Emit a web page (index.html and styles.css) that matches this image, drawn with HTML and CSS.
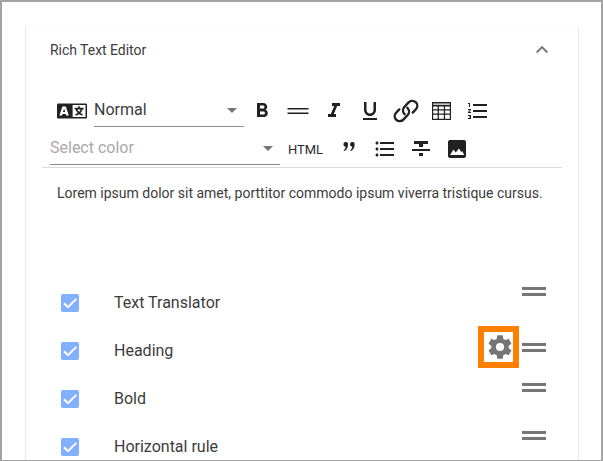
FILE: index.html
```html
<!DOCTYPE html>
<html lang="en">
<head>
<meta charset="utf-8">
<title>Rich Text Editor</title>
<link rel="stylesheet" href="styles.css">
</head>
<body>
<main class="frame">
  <section class="card">
    <header class="card-header">
      <h1 class="title">Rich Text Editor</h1>
      <svg class="chevron" viewBox="0 0 16 12"><path d="M2.7 8.5 8 3.2l5.3 5.3"/></svg>
    </header>
    <div class="toolbar">
      <div class="tool-row first">
        <svg class="tool translate" viewBox="0 0 36 36">
          <rect x="3" y="10.5" width="30" height="15" rx="1.2"/>
          <rect class="paper" x="18.6" y="12" width="12.9" height="12"/>
          <path class="paper" fill-rule="evenodd" d="M8.400 13.500h3.400l3 9h-2.600l-.5-1.600H8.500l-.5 1.600H5.400zM9 19h2.200l-1.100-3.600z"/>
          <path class="stroke" stroke-width="1.7" d="M20.600 15.700h9M25 13.200v2.500M22.300 16c.8 2.800 3 5 6.200 6M27.800 16c-.8 2.800-3 5-6.300 6"/>
        </svg>
        <div class="select heading-select"><span>Normal</span><i class="caret"></i></div>
        <svg class="tool" viewBox="-6 -6 36 36"><path d="M15.6 10.79c.97-.67 1.65-1.77 1.65-2.79 0-2.26-1.75-4-4-4H7v14h7.04c2.09 0 3.71-1.7 3.71-3.79 0-1.52-.86-2.82-2.15-3.42zM10 6.5h3c.83 0 1.5.67 1.5 1.5s-.67 1.5-1.5 1.5h-3v-3zm3.5 9H10v-3h3.5c.83 0 1.5.67 1.5 1.5s-.67 1.5-1.5 1.5z"/></svg>
        <svg class="tool" viewBox="0 0 36 36"><path d="M7.5 15h21v1.5h-21zM7.5 19.4h21v1.5h-21z"/></svg>
        <svg class="tool" viewBox="-6 -6 36 36"><path d="M10 4v3h2.21l-3.42 8H6v3h8v-3h-2.21l3.42-8H18V4z"/></svg>
        <svg class="tool" viewBox="-6 -6 36 36"><path d="M12 17c3.31 0 6-2.69 6-6V3h-2.5v8c0 1.93-1.57 3.5-3.5 3.5S8.5 12.93 8.5 11V3H6v8c0 3.31 2.69 6 6 6zm-7 2v2h14v-2H5z"/></svg>
        <svg class="tool" viewBox="0 0 36 36"><path class="stroke" stroke-width="2.4" stroke-linecap="round" d="M16.600 21.200a5.200 5.200 0 0 1-.3-7.200l4.300-4.600a5 5 0 0 1 7.300 6.900l-3.200 3.300M19.400 14.800a5.200 5.200 0 0 1 .3 7.200l-4.300 4.600a5 5 0 0 1-7.300-6.900l3.200-3.300"/></svg>
        <svg class="tool" viewBox="0 0 36 36"><path fill-rule="evenodd" d="M8 9h19v18H8zm1.200 1.400v1.300h16.600v-1.300zm0 3.100v2.700h4.400v-2.700zm5.700 0v2.700h4.900v-2.700zm6.200 0v2.700h4.700v-2.700zm-11.900 4.100v2.800h4.400v-2.800zm5.700 0v2.800h4.900v-2.800zm6.200 0v2.800h4.700v-2.800zm-11.900 4.200v3.900h4.400v-3.900zm5.700 0v3.900h4.900v-3.900zm6.200 0v3.900h4.700v-3.900z"/></svg>
        <svg class="tool" viewBox="-6 -6 36 36"><path d="M2 17h2v.5H3v1h1v.5H2v1h3v-4H2v1zm1-9h1V4H2v1h1v3zm-1 3h1.8L2 13.1v.9h3v-1H3.2L5 10.9V10H2v1zm5-6v2h14V5H7zm0 14h14v-2H7v2zm0-6h14v-2H7v2z"/></svg>
      </div>
      <div class="tool-row second">
        <div class="select color-select"><span>Select color</span><i class="caret"></i></div>
        <span class="html-button">HTML</span>
        <svg class="tool" viewBox="0 0 36 36"><path d="M14.700 11a2.200 2.200 0 0 1 2.300 2.500c0 3.200-1.400 5.500-3.600 6.600l-.8-.8c1.300-1 1.900-2.200 2-3.600a2.300 2.300 0 0 1-2.200-2.400 2.300 2.300 0 0 1 2.300-2.300zM21.300 11a2.200 2.200 0 0 1 2.300 2.500c0 3.200-1.400 5.500-3.600 6.600l-.8-.8c1.300-1 1.900-2.200 2-3.600a2.300 2.300 0 0 1-2.200-2.400 2.300 2.300 0 0 1 2.300-2.300z"/></svg>
        <svg class="tool" viewBox="-6 -6 36 36"><path d="M4 10.5c-.83 0-1.5.67-1.5 1.5s.67 1.5 1.5 1.5 1.5-.67 1.5-1.5-.67-1.5-1.5-1.5zm0-6c-.83 0-1.5.67-1.5 1.5S3.17 7.5 4 7.5 5.5 6.83 5.5 6 4.83 4.5 4 4.5zm0 12c-.83 0-1.5.68-1.5 1.5s.68 1.5 1.5 1.5 1.5-.68 1.5-1.5-.67-1.5-1.5-1.5zM7 19h14v-2H7v2zm0-6h14v-2H7v2zm0-8v2h14V5H7z"/></svg>
        <svg class="tool" viewBox="-6 -6 36 36"><path d="M10 19h4v-3h-4v3zM5 4v3h5v3h4V7h5V4H5zM3 14h18v-2H3v2z"/></svg>
        <svg class="tool" viewBox="-6 -6 36 36"><path d="M21 19V5c0-1.1-.9-2-2-2H5c-1.1 0-2 .9-2 2v14c0 1.1.9 2 2 2h14c1.1 0 2-.9 2-2zM5 18l3.500-5.500 2.200 3L14 11.500l2.200 3.500 1-1L19.300 18z"/></svg>
      </div>
    </div>
    <p class="content">Lorem ipsum dolor sit amet, porttitor commodo ipsum viverra tristique cursus.</p>
    <ul class="options">
      <li class="option">
        <span class="check"><svg viewBox="0 0 18 18"><path d="M3 9.200l4 4 8.300-8.300"/></svg></span>
        <span class="label">Text Translator</span><i class="handle"></i>
      </li>
      <li class="option has-settings">
        <span class="check"><svg viewBox="0 0 18 18"><path d="M3 9.200l4 4 8.300-8.300"/></svg></span>
        <span class="label">Heading</span>
        <span class="settings"><svg viewBox="0 0 24 24"><path d="M19.430 12.980c.04-.32.07-.64.07-.98s-.03-.66-.07-.98l2.110-1.650c.19-.15.24-.42.12-.64l-2-3.460c-.12-.22-.39-.3-.61-.22l-2.490 1c-.52-.4-1.080-.73-1.690-.98l-.38-2.650C14.460 2.180 14.250 2 14 2h-4c-.25 0-.46.18-.49.42l-.38 2.650c-.61.25-1.170.59-1.690.98l-2.490-1c-.23-.09-.49 0-.61.22l-2 3.460c-.13.22-.07.49.12.64l2.110 1.650c-.04.32-.07.65-.07.98s.03.66.07.98l-2.110 1.650c-.19.15-.24.42-.12.64l2 3.460c.12.22.39.3.61.22l2.490-1c.52.4 1.080.73 1.690.98l.38 2.650c.03.24.24.42.49.42h4c.25 0 .46-.18.49-.42l.38-2.650c.61-.25 1.170-.59 1.690-.98l2.490 1c.23.09.49 0 .61-.22l2-3.460c.12-.22.07-.49-.12-.64l-2.110-1.650zM12 15.500a3.500 3.500 0 1 1 0-7 3.500 3.500 0 0 1 0 7z"/></svg></span>
        <i class="handle"></i>
      </li>
      <li class="option">
        <span class="check"><svg viewBox="0 0 18 18"><path d="M3 9.200l4 4 8.300-8.300"/></svg></span>
        <span class="label">Bold</span><i class="handle"></i>
      </li>
      <li class="option">
        <span class="check"><svg viewBox="0 0 18 18"><path d="M3 9.200l4 4 8.300-8.300"/></svg></span>
        <span class="label">Horizontal rule</span><i class="handle"></i>
      </li>
    </ul>
  </section>
</main>
</body>
</html>
```
FILE: styles.css
```css
* { box-sizing: border-box; }
html, body { margin: 0; height: 100%; overflow: hidden; }
body { font-family: Roboto, "Liberation Sans", sans-serif; color: #3c3c3c; background: #fff; }

.frame {
  height: 461px;
  padding: 23px 23px 0 24px;
  border: 2px solid #a3a3a3;
  border-bottom-width: 1px;
  overflow: hidden;
}
.card {
  width: 552px;
  height: 500px;
  border-radius: 2px;
  box-shadow: 0 1px 2px rgba(0, 0, 0, .32);
}
.card-header {
  display: flex;
  align-items: center;
  justify-content: space-between;
  height: 50px;
  padding: 0 28px 0 24px;
}
.title { margin: 0; font-size: 14px; font-weight: 400; letter-spacing: -.03px; }
.chevron { width: 16px; height: 12px; fill: none; stroke: #757575; stroke-width: 1.9; }

.toolbar {
  margin: 18px 16px 0;
  border-bottom: 1px solid #dadada;
}
.tool-row { display: flex; }
.first { height: 38px; padding-left: 12px; }
.second { height: 36px; padding-left: 8px; }
.tool { flex: none; width: 36px; height: 36px; fill: #212121; }
.translate { margin-right: 4px; }
.paper { fill: #fff; }
.stroke { fill: none; stroke: #212121; }

.select {
  display: flex;
  align-items: center;
  justify-content: space-between;
  height: 34px;
  padding-right: 7px;
  border-bottom: 1px solid #8c8c8c;
  font-size: 16px;
}
.heading-select { width: 150px; }
.color-select { width: 230px; color: #a9a9a9; }
.caret {
  margin-top: 2px;
  border: 5px solid transparent;
  border-top-color: #757575;
  border-bottom: 0;
}
.html-button { width: 51px; line-height: 37px; text-align: center; font-size: 13px; color: #2b2b2b; }

.content {
  height: 111px;
  margin: 0;
  padding: 17px 31px 0;
  font-size: 14px;
  line-height: 16px;
  white-space: nowrap;
}

.options { margin: 0; padding: 0; list-style: none; }
.option {
  display: flex;
  align-items: center;
  height: 48px;
  padding: 0 32px 0 35px;
}
.check {
  width: 18px;
  height: 18px;
  margin-right: 35px;
  border-radius: 2px;
  background: #80b0ff;
}
.check svg { display: block; fill: none; stroke: #fff; stroke-width: 2; }
.label { flex: 1; padding-bottom: 2px; font-size: 16px; }
.handle {
  width: 24px;
  height: 9px;
  margin-bottom: 24px;
  border: solid #757575;
  border-width: 3px 0;
}
.has-settings .handle { margin-bottom: 8px; }
.settings {
  display: flex;
  align-items: center;
  justify-content: center;
  width: 41px;
  height: 42px;
  margin: 0 3px 8px 0;
  padding-left: 2px;
  border: 6px solid #ff8000;
}
.settings svg { flex: none; width: 28px; height: 28px; fill: #757575; }
```
